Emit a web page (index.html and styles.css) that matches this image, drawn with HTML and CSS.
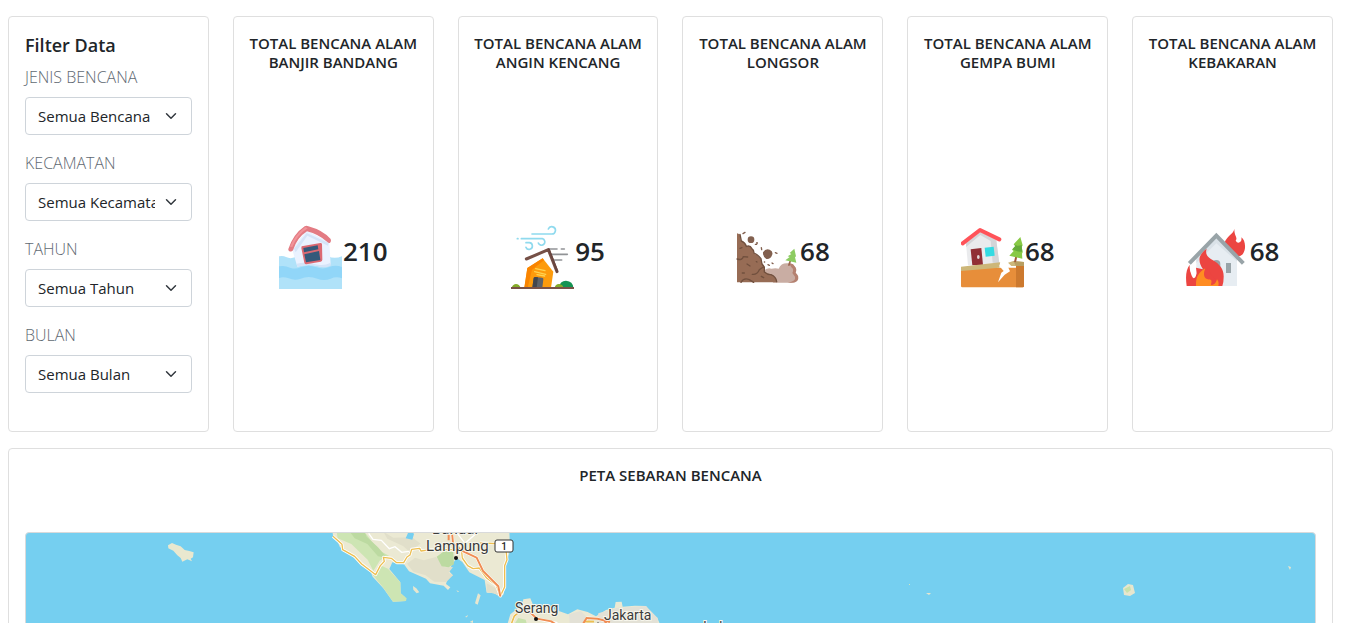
FILE: index.html
```html
<!DOCTYPE html>
<html lang="id">
<head>
<meta charset="utf-8">
<meta name="viewport" content="width=device-width, initial-scale=1">
<title>Sebaran Bencana</title>
<link rel="stylesheet" href="styles.css">
</head>
<body>
<main class="dashboard">
  <div class="summary">
    <form class="card filter">
      <h5 class="filter-title">Filter Data</h5>
      <label class="filter-label" for="jenis">JENIS BENCANA</label>
      <select class="filter-select" id="jenis"><option>Semua Bencana</option></select>
      <label class="filter-label" for="kecamatan">KECAMATAN</label>
      <select class="filter-select" id="kecamatan"><option>Semua Kecamatan</option></select>
      <label class="filter-label" for="tahun">TAHUN</label>
      <select class="filter-select" id="tahun"><option>Semua Tahun</option></select>
      <label class="filter-label" for="bulan">BULAN</label>
      <select class="filter-select" id="bulan"><option>Semua Bulan</option></select>
    </form>

    <section class="card stat">
      <h6 class="stat-title">TOTAL BENCANA ALAM BANJIR BANDANG</h6>
      <div class="stat-body">
        <svg class="stat-icon" viewBox="33 30 192 192" aria-hidden="true">
          <path fill="#b0e2f9" d="M33 124Q45 121 54 126Q68 133 82 126L180 124Q200 133 222 124V222H33Z"/>
          <path fill="#eaf2ff" d="M72 101L116 46L184 82L188 148Q170 158 151 154Q119 146 88 155Z"/>
          <path fill="#d5e4f8" d="M78 101L116 54L182 84L180 92L118 62L83 112ZM86 146Q115 140 150 149Q170 152 188 143V152Q170 160 151 154Q119 146 88 155Z"/>
          <path fill="#e37b83" d="M61 102Q76 57 110 34Q115 31 121 34Q165 46 188 72Q191 78 186 84Q181 85 178 81Q152 58 117 49Q87 68 75 106Q70 112 63 108Q60 105 61 102Z"/>
          <path fill="#f1949a" d="M66 95Q82 58 112 36L119 40Q87 60 73 96Z"/>
          <path fill="#dc6972" d="M101 94L157 84Q161 83 162 88L163 134Q163 139 158 140L115 148Q110 148 109 143L100 99Z"/>
          <path fill="#35597a" d="M106 99L149 91L151 103L108 112ZM109 118L153 108L157 135L114 142Z"/>
          <path fill="#91d6f8" d="M33 154Q50 150 66 158Q82 164 98 157Q122 147 145 157Q165 164 184 156Q203 148 222 156V190Q205 183 188 191Q168 199 148 191Q122 181 98 191Q80 198 62 190Q46 184 33 189Z"/>
        </svg>
        <span class="stat-value">210</span>
      </div>
    </section>

    <section class="card stat">
      <h6 class="stat-title">TOTAL BENCANA ALAM ANGIN KENCANG</h6>
      <div class="stat-body">
        <svg class="stat-icon" viewBox="33 30 192 192" aria-hidden="true">
          <g fill="none" stroke="#8fdaee" stroke-width="5" stroke-linecap="round">
            <path d="M96 57H154A11 11 0 1 0 145 42M64 71H127A10 10 0 1 1 115 84M52 71h2M78 83H88A10 10 0 1 1 78 97"/>
          </g>
          <path fill="none" stroke="#919396" stroke-width="5" stroke-linecap="round" d="M146 102h25M184 102h9M151 118h51M160 135h25"/>
          <path fill="#fd9b0c" d="M82 159L128 130L160 170L153 218H73Z"/>
          <path fill="#f98400" d="M82 159L128 130L132 136L96 164L83 218H73Z"/>
          <path fill="#5d6269" d="M101 189Q102 186 106 186L126 188Q131 188 130 193L127 218H97Z"/>
          <path fill="#42464d" d="M101 189Q102 186 106 186L114 187L110 218H97Z"/>
          <path fill="none" stroke="#ffd34f" stroke-width="4" stroke-linecap="round" d="M107 161l28 6M104 170l33 8M111 179l23 4"/>
          <path fill="none" stroke="#765047" stroke-width="9" stroke-linecap="round" stroke-linejoin="round" d="M79 132L145 104L171 170"/>
          <path fill="#694640" d="M143 101L149 101L175 169L170 173L146 108Z"/>
          <path fill="#149352" d="M176 218Q180 197 198 197Q219 199 220 218Z"/>
          <path fill="#85ab29" d="M164 218Q167 206 178 207Q189 209 190 218ZM35 218Q39 207 48 207Q58 208 62 218Z"/>
          <path stroke="#795247" stroke-width="6" d="M33 219H222"/>
        </svg>
        <span class="stat-value">95</span>
      </div>
    </section>

    <section class="card stat">
      <h6 class="stat-title">TOTAL BENCANA ALAM LONGSOR</h6>
      <div class="stat-body">
        <svg class="stat-icon" viewBox="33 30 192 192" aria-hidden="true">
          <path fill="#c9ada3" d="M115 169Q126 157 139 161Q152 158 161 161Q168 145 185 145Q202 142 208 154Q216 161 211 173Q224 184 216 197Q212 203 199 203H145Z"/>
          <path fill="#b58170" d="M193 146Q205 144 209 154Q217 162 212 173Q225 184 217 197Q212 203 199 203H188Q214 198 210 185L202 174Q208 163 199 157Z"/>
          <path fill="#976c55" d="M36 55L44 58L48 77Q60 80 64 94Q76 90 80 100Q87 105 87 114Q96 120 101 126Q111 132 110 144Q121 151 118 168Q126 178 136 178Q152 184 156 202H36Z"/>
          <path fill="none" stroke="#71503e" stroke-width="4" stroke-linecap="round" d="M45 58L49 78Q60 82 64 94Q76 90 80 100Q87 105 87 114Q100 120 108 131L111 147L118 157V171Q129 180 138 179Q153 185 155 200M36 132Q52 137 55 125L68 126M82 178Q96 180 103 164L115 156M48 202Q56 187 73 194L86 202M66 147l9 6M45 100l6-2M52 174h6M109 184l7 4M94 140l2 1"/>
          <g fill="#82604f"><circle cx="78" cy="74" r="10"/><path d="M114 112Q122 99 134 104Q146 109 141 121Q136 134 124 132Q113 125 114 112Z"/><circle cx="96" cy="84" r="3"/></g>
          <path stroke="#82604f" stroke-width="4" stroke-linecap="round" d="M54 56l6-4M91 88h4M109 98l1 6M151 113l5 2M118 141h1M129 149l4 2M141 144l3 2"/>
          <path stroke="#9a6650" stroke-width="5" d="M196 137L191 152"/>
          <path fill="#8dcc62" d="M208 101L213 124L210 127L214 143L181 136L194 126L188 124L199 117L194 114Z"/>
        </svg>
        <span class="stat-value">68</span>
      </div>
    </section>

    <section class="card stat">
      <h6 class="stat-title">TOTAL BENCANA ALAM GEMPA BUMI</h6>
      <div class="stat-body">
        <svg class="stat-icon" viewBox="33 30 192 192" aria-hidden="true">
          <path fill="#eaebed" d="M48 86L91 50L139 76L148 150L54 151Z"/>
          <path fill="#d4d5d8" d="M91 50L139 76L148 145L128 143L122 78L91 60L48 96V85Z"/>
          <path fill="none" stroke="#ff5359" stroke-width="12" stroke-linecap="round" stroke-linejoin="round" d="M38 85L90 45L148 73"/>
          <path fill="#912f35" d="M62 103L94 99L99 150L67 151Z"/><ellipse cx="85" cy="126" rx="4" ry="6" fill="#e2d8d9"/>
          <path fill="#34dbe2" d="M104 98L131 95L134 122L107 125Z"/>
          <path fill="#e78e3a" d="M33 158H222V214Q222 217 218 217H37Q33 217 33 213Z"/>
          <path fill="#cc792e" d="M198 153H222V214Q222 217 218 217H198Z"/>
          <path fill="#cdb779" d="M33 155L151 142L148 158L33 168ZM174 143L190 138L222 141V153H184Z"/>
          <path fill="#b89e61" d="M190 138L222 141V153H198Z"/>
          <path fill="#fff" d="M151 142L175 140L171 149L180 169L164 179L144 202L154 173L161 168L148 153Z"/>
          <path stroke="#a15837" stroke-width="6" d="M199 124L195 141"/>
          <path fill="#88c945" d="M211 66L218 91L215 96L218 112L216 116L217 131L178 122L191 108L186 104L196 93L191 88Z"/>
          <path fill="#65ab3a" d="M191 88Q202 95 215 90L217 110Q203 112 187 103L196 93Z"/>
        </svg>
        <span class="stat-value">68</span>
      </div>
    </section>

    <section class="card stat">
      <h6 class="stat-title">TOTAL BENCANA ALAM KEBAKARAN</h6>
      <div class="stat-body">
        <svg class="stat-icon" viewBox="33 30 192 192" aria-hidden="true">
          <path fill="#ec4541" d="M178 42C178 65 189 66 182 77Q188 87 195 81Q201 78 199 67C210 74 215 100 204 116Q198 125 187 124L148 84C158 60 174 59 178 42Z"/>
          <path fill="#e7edf2" d="M64 126L124 70L186 126V213H64Z"/>
          <path fill="#dae2e8" d="M64 126L124 70L186 126V139L124 85L64 144Z"/>
          <path fill="#99a4a8" d="M112 180V147A12 12 0 0 1 136 147V180ZM153 144H168V174H153Z"/>
          <path fill="none" stroke="#99a4a8" stroke-width="12" d="M43 145L124 62L205 145"/>
          <path fill="#ec4541" d="M44 149C43 170 50 178 57 182C68 184 64 168 63 158L84 163C67 137 70 120 95 101C89 119 100 128 114 136C135 148 147 164 146 186Q146 203 142 213H35C31 183 33 164 44 149Z"/>
          <path fill="#fff" d="M46 153C45 166 48 185 56 190Q66 187 63 164L59 153Z"/>
          <path fill="#ff8c22" d="M91 160C86 183 95 193 104 193C113 194 112 202 108 210Q123 208 126 193Q133 201 130 213H63C62 185 71 173 91 160Z"/>
          <path fill="#ec4541" d="M91 160C82 182 89 195 104 193Q113 194 108 210Q123 208 122 194C121 184 104 184 103 164Z"/>
        </svg>
        <span class="stat-value">68</span>
      </div>
    </section>
  </div>

  <section class="card map-card">
    <h6 class="stat-title">PETA SEBARAN BENCANA</h6>
    <div class="map">
      <svg class="map-canvas" role="img" aria-label="Peta sebaran bencana">
        <g transform="translate(294 -8) scale(.3333)">
          <path fill="#ebe9d3" d="M36 10L40 39L52 48L60 67L82 78L104 101L121 120L151 137L158 155L190 190L219 230L258 228L255 217L242 205L241 172L208 132L217 112L252 118L267 139L318 161L330 175L371 182L384 195L391 187L378 177L384 159L399 151L386 137L399 115L410 99L427 111L448 142L494 165L500 203L521 204L541 216L551 208L558 155L553 127L561 105L570 78L568 10Z"/>
          <path fill="#e1dfca" d="M261 116L285 98L311 106L348 96L374 127L399 126L386 143L399 151L379 171L343 170L317 151L280 140ZM190 20L220 38L276 37L302 56L267 79L249 63L202 41ZM500 175L530 191L535 209L500 200Z"/>
          <path fill="#cde5b3" d="M48 10L53 40L94 57L143 104L160 138L180 106L207 92L175 75L139 28L110 10ZM159 151L181 121L204 131L241 172L242 205L260 220L258 228L219 230L190 188Z"/>
          <path fill="#bcdaa1" d="M82 10L104 40L142 57L174 94L202 99L174 67L140 35L130 10ZM350 95L374 77L400 80L402 118L386 127L365 124Z"/>
          <path fill="#75cff0" d="M270 10L282 27L277 44L257 40L263 26ZM555 106L569 98V130Z"/>
          <path fill="#e7e6ce" d="M279 183L289 190L298 202L290 205L280 194ZM474 205L482 211L473 239L465 235ZM409 196l8 3-3 3zM435 276l9-6-3 7zM449 291l10-5v8z"/>
          <path fill="none" stroke="#fff" stroke-width="9" stroke-linejoin="round" d="M39 34L66 58L68 74L104 94L125 117L167 149L181 122L193 109L190 97L214 100L230 113L251 113L261 96L270 90L275 73L299 70L303 78L333 74L427 74L410 59M425 80L427 99L443 122L459 131L478 129L500 159L529 181L541 213L554 186V122L561 104L556 57L480 54"/>
          <path fill="none" stroke="#edbf52" stroke-width="4" stroke-linejoin="round" d="M39 34L66 58L68 74L104 94L125 117L167 149L181 122L193 109L190 97L214 100L230 113L251 113L261 96L270 90L275 73L299 70L303 78L333 74L427 74L410 59M425 80L427 99L443 122L459 131L478 129L500 159L529 181L541 213L554 186V122L561 104L556 57L480 54"/>
          <path fill="none" stroke="#fff" stroke-width="4" d="M146 25L159 43L184 46L208 71L225 65L245 82L267 79M408 20L435 55L466 28"/>
          <path fill="none" stroke="#fff" stroke-width="9" d="M395 10L399 54L427 78L470 98L489 138L535 184L541 214"/>
          <path fill="none" stroke="#f08d53" stroke-width="6" d="M395 10L399 54L427 78L470 98L489 138L535 184L541 214M386 10V46"/>
        </g>
        <g transform="translate(474 57) scale(.3333)">
          <path fill="#ebe9d3" d="M20 110L31 73L48 59L65 48L70 28L91 25L98 42L151 54L204 73L232 58L263 66L288 79L318 60L344 53L347 36L365 35L368 50L405 47L438 48L456 73L472 83L483 110Z"/>
          <path fill="#e3e1d6" d="M207 73L242 63L258 78L242 110H210ZM295 70L350 54L438 48L473 84V110H290Z"/>
          <path fill="#c8e2ad" d="M38 110L55 84L77 89L83 110Z"/>
          <path fill="none" stroke="#fff" stroke-width="8" d="M31 110L43 78L61 63M83 61L111 86L172 100M248 110L262 84L293 86L325 97"/>
          <path fill="none" stroke="#edbf52" stroke-width="5" d="M31 110L43 78L61 63M246 110L255 94L282 95"/>
          <path fill="none" stroke="#f08d53" stroke-width="6" d="M83 61L111 86L154 94L172 106M250 100L260 84L293 86L330 96M312 90L325 110"/>
        </g>
        <path fill="#e9e8cf" transform="translate(124 -3) scale(.3333)" d="M54 46L66 39L78 44L92 49L104 60L118 63L131 67L129 82L122 86L126 94L112 88L97 95L92 84L82 76L70 62L55 55Z"/>
        <path fill="#e7e6ce" d="M1097 55l5-4 5 1 2 8-5 3-6-1zM1262 33l3 1-1 3zM900 60l5 0-2 2z"/>
        <path fill="#c8e2ad" d="M1098 56l6-3 1 4-4 3z"/>
        <path fill="#d7e6bc" d="M883 51h1v1h-1z"/>
        <g class="map-label">
          <text x="406" y="1">Bandar</text><text x="400" y="18">Lampung</text>
          <text class="map-city" x="489" y="80">Serang</text><text class="map-city" x="578" y="87">Jakarta</text><text class="map-city" x="677" y="99">Indramayu</text>
        </g>
        <g fill="#111"><circle cx="430" cy="25" r="2"/><circle cx="510" cy="86" r="2"/></g>
        <circle cx="572" cy="92" r="2" fill="#fff" stroke="#111"/>
        <rect x="469" y="7" width="18" height="12" rx="2" fill="#fff" stroke="#333"/>
        <text class="road-label" x="478" y="17">1</text>
      </svg>
    </div>
  </section>
</main>
</body>
</html>
```

FILE: styles.css
```css
* { box-sizing: border-box; }

html { scrollbar-width: none; }

body {
  margin: 0;
  background: #fff;
  color: #212529;
  font: 400 16px/24px "Open Sans", "Noto Sans", sans-serif;
}

.dashboard {
  display: flex;
  flex-direction: column;
  gap: 16px;
  padding: 16px 12px 16px 8px;
}

.summary {
  display: grid;
  grid-template-columns: repeat(6, minmax(0, 1fr));
  gap: 24px;
}

.card {
  display: flex;
  flex-direction: column;
  border: 1px solid #dfdfdf;
  border-radius: 4px;
  background: #fff;
}

.filter { padding: 16px 16px 22px; }

.filter-title {
  margin: 0 0 8px;
  font-size: 18px;
  font-weight: 600;
  line-height: 24px;
}

.filter-label {
  margin-bottom: 8px;
  color: #5f6972;
  font-size: 16px;
  font-weight: 300;
}

.filter-select {
  appearance: none;
  width: 100%;
  height: 38px;
  margin: 0 0 16px;
  padding: 6px 36px 6px 12px;
  border: 1px solid #ced4da;
  border-radius: 4px;
  background: #fff url("data:image/svg+xml,%3Csvg xmlns='http://www.w3.org/2000/svg' viewBox='0 0 16 16'%3E%3Cpath fill='none' stroke='%23343a40' stroke-linecap='round' stroke-linejoin='round' stroke-width='2' d='M2 5l6 6 6-6'/%3E%3C/svg%3E") no-repeat right 14px center / 12px 12px;
  color: #212529;
  font: 400 15px/24px "Open Sans", "Noto Sans", sans-serif;
}

.stat { padding: 17px 8px 0; }

.stat-title {
  margin: 0 0 8px;
  font-size: 15px;
  font-weight: 600;
  line-height: 19px;
  text-align: center;
}

.stat-body {
  display: flex;
  flex: 1;
  align-items: center;
  justify-content: center;
  padding-top: 2px;
}

.stat-icon {
  flex: none;
  width: 64px;
  height: 64px;
}

.stat-value {
  padding-bottom: 12px;
  font-size: 26px;
  font-weight: 600;
  line-height: 34px;
}

.map-card { padding: 17px 16px 16px; }

.map-card .stat-title { margin-bottom: 47px; }

.map {
  height: 500px;
  overflow: hidden;
  border: 1px solid #d9dadb;
  border-radius: 4px;
  background: #75cff0;
}

.map-canvas {
  display: block;
  width: 100%;
  height: 100%;
}

.map-label {
  fill: #3b3b3b;
  stroke: #f7f6ec;
  stroke-width: 2px;
  paint-order: stroke;
  font: 400 15px Roboto, sans-serif;
}

.map-city { font-size: 14px; }

.road-label {
  fill: #222;
  font: 500 10px Roboto, sans-serif;
  text-anchor: middle;
}
```
